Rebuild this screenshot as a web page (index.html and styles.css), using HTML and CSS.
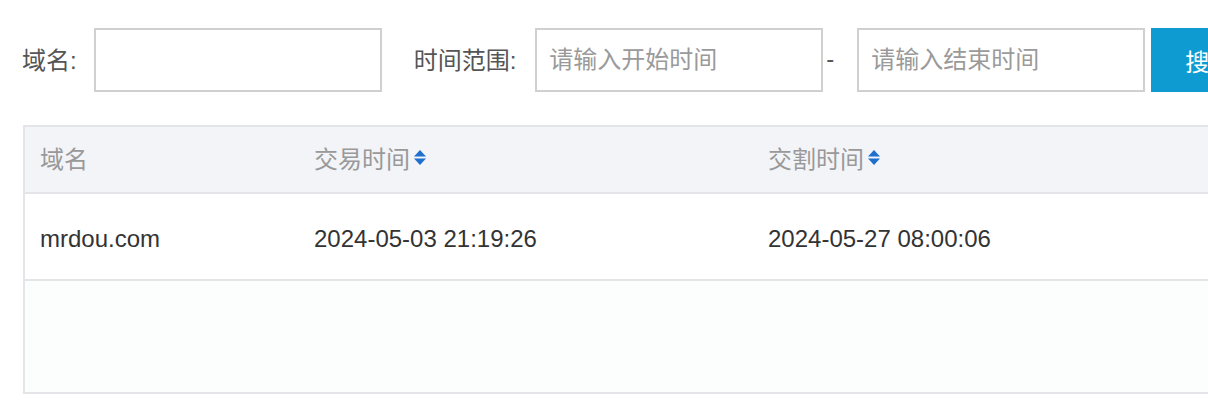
FILE: index.html
```html
<!DOCTYPE html>
<html lang="zh-CN">
<head>
<meta charset="utf-8">
<title>交易记录</title>
<link rel="stylesheet" href="styles.css">
</head>
<body>
<div class="page">
  <form class="filters">
    <label class="label">域名:</label>
    <input class="field" type="text">
    <label class="label label-time">时间范围:</label>
    <input class="field" type="text" placeholder="请输入开始时间">
    <span class="dash">-</span>
    <input class="field" type="text" placeholder="请输入结束时间">
    <button class="btn" type="button">搜索</button>
  </form>

  <div class="table">
    <div class="row head">
      <div class="cell c1">域名</div>
      <div class="cell c2">交易时间<span class="sort"><svg width="12" height="15" viewBox="0 0 12 15"><path d="M6 0 L12 6.5 H0 Z" fill="#1f6fce"/><path d="M0 8.5 H12 L6 15 Z" fill="#1f6fce"/></svg></span></div>
      <div class="cell c3">交割时间<span class="sort"><svg width="12" height="15" viewBox="0 0 12 15"><path d="M6 0 L12 6.5 H0 Z" fill="#1f6fce"/><path d="M0 8.5 H12 L6 15 Z" fill="#1f6fce"/></svg></span></div>
    </div>
    <div class="row body-row">
      <div class="cell c1">mrdou.com</div>
      <div class="cell c2">2024-05-03 21:19:26</div>
      <div class="cell c3">2024-05-27 08:00:06</div>
    </div>
    <div class="empty"></div>
  </div>
</div>
</body>
</html>
```

FILE: styles.css
```css
html, body {
  margin: 0;
  padding: 0;
  background: #fff;
  overflow: hidden;
}

body {
  font-family: "Liberation Sans", "Noto Sans CJK SC", sans-serif;
  font-size: 24px;
  color: #333;
}

.page {
  width: 1400px;
  padding: 28px 0 0 22px;
}

.filters {
  display: flex;
  align-items: center;
  height: 64px;
  margin: 0;
}

.label {
  color: #555;
  font-size: 24px;
  margin-right: 17px;
  padding-bottom: 3px;
}

.label-time {
  margin-left: 32px;
  margin-right: 19px;
}

.field {
  box-sizing: border-box;
  width: 288px;
  height: 64px;
  border: 2px solid #d0d0d0;
  background: #fff;
  padding: 0 12px;
  font-family: inherit;
  font-size: 24px;
  color: #333;
  outline: none;
}

.field::placeholder {
  color: #9a9a9a;
}

.dash {
  width: 34px;
  padding-left: 3px;
  padding-bottom: 3px;
  box-sizing: border-box;
  color: #555;
}

.btn {
  margin-left: 6px;
  height: 64px;
  width: 130px;
  border: none;
  background: #0e9bd2;
  color: #fff;
  font-family: inherit;
  font-size: 24px;
  text-align: left;
  padding: 0 0 0 34px;
}

.table {
  margin-top: 33px;
  margin-left: 1px;
  width: 1300px;
  border: 2px solid #e3e5e8;
  border-right: none;
}

.row {
  display: flex;
  align-items: center;
  box-sizing: border-box;
}

.head {
  height: 67px;
  padding-bottom: 4px;
  background: #f3f4f8;
  color: #999;
  border-bottom: 2px solid #e3e5e8;
}

.body-row {
  height: 87px;
  padding-top: 4px;
  border-bottom: 2px solid #e3e5e8;
  color: #333;
}

.cell {
  box-sizing: border-box;
  padding-left: 15px;
  display: flex;
  align-items: center;
}

.c1 { width: 274px; }
.c2 { width: 454px; }
.c3 { flex: 1; }

.sort {
  display: inline-flex;
  margin-left: 4px;
}

.empty {
  height: 111px;
  background: #fcfdfd;
}
```
